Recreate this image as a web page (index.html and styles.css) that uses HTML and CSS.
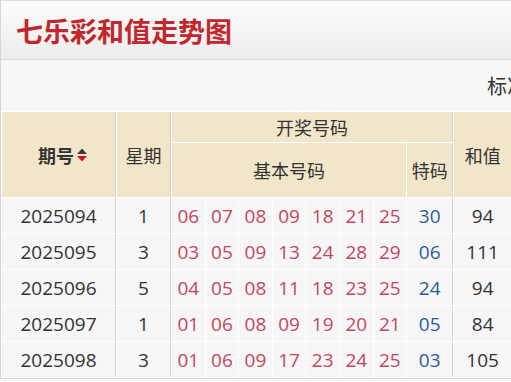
FILE: index.html
```html
<!DOCTYPE html>
<html lang="zh-CN">
<head>
<meta charset="utf-8">
<title>七乐彩和值走势图</title>
<link rel="stylesheet" href="styles.css">
</head>
<body>
<div class="page">
  <div class="titlebar"><h1 class="title">七乐彩和值走势图</h1></div>
  <div class="toolbar"><span class="mode">标准</span></div>
  <table class="chart">
    <thead>
      <tr class="hrow1">
        <th rowspan="2" class="c-issue grp"><span class="issue-head">期号<svg class="sort" width="10" height="14" viewBox="0 0 10 14"><polygon points="0,6 5,0.5 10,6" fill="#3a3a3a"/><polygon points="0,8 10,8 5,13.5" fill="#c8181e"/></svg></span></th>
        <th rowspan="2" class="c-week grp norm">星期</th>
        <th colspan="8" class="grp norm">开奖号码</th>
        <th rowspan="2" class="c-sum grp norm">和值</th>
      </tr>
      <tr class="hrow2">
        <th colspan="7" class="norm">基本号码</th>
        <th class="grp norm">特码</th>
      </tr>
    </thead>
    <tbody>
      <tr>
        <td class="c-issue grp">2025094</td><td class="c-week grp">1</td>
        <td class="c-num red">06</td><td class="c-num red">07</td><td class="c-num red">08</td><td class="c-num red">09</td><td class="c-num red">18</td><td class="c-num red">21</td><td class="c-num red">25</td>
        <td class="c-sp blue grp">30</td><td class="c-sum grp">94</td>
      </tr>
      <tr>
        <td class="c-issue grp">2025095</td><td class="c-week grp">3</td>
        <td class="c-num red">03</td><td class="c-num red">05</td><td class="c-num red">09</td><td class="c-num red">13</td><td class="c-num red">24</td><td class="c-num red">28</td><td class="c-num red">29</td>
        <td class="c-sp blue grp">06</td><td class="c-sum grp">111</td>
      </tr>
      <tr>
        <td class="c-issue grp">2025096</td><td class="c-week grp">5</td>
        <td class="c-num red">04</td><td class="c-num red">05</td><td class="c-num red">08</td><td class="c-num red">11</td><td class="c-num red">18</td><td class="c-num red">23</td><td class="c-num red">25</td>
        <td class="c-sp blue grp">24</td><td class="c-sum grp">94</td>
      </tr>
      <tr>
        <td class="c-issue grp">2025097</td><td class="c-week grp">1</td>
        <td class="c-num red">01</td><td class="c-num red">06</td><td class="c-num red">08</td><td class="c-num red">09</td><td class="c-num red">19</td><td class="c-num red">20</td><td class="c-num red">21</td>
        <td class="c-sp blue grp">05</td><td class="c-sum grp">84</td>
      </tr>
      <tr>
        <td class="c-issue grp">2025098</td><td class="c-week grp">3</td>
        <td class="c-num red">01</td><td class="c-num red">06</td><td class="c-num red">09</td><td class="c-num red">17</td><td class="c-num red">23</td><td class="c-num red">24</td><td class="c-num red">25</td>
        <td class="c-sp blue grp">03</td><td class="c-sum grp">105</td>
      </tr>
    </tbody>
  </table>
</div>
</body>
</html>
```
FILE: styles.css
```css
html, body {
  margin: 0;
  padding: 0;
  overflow: hidden;
  background: #f7f7f7;
}
body {
  font-family: "Open Sans", "Noto Sans CJK SC", sans-serif;
  color: #333;
}
.page {
  width: 900px;
  border-left: 1px solid #d6d6d6;
  border-top: 1px solid #dcdcdc;
  background: #f7f7f7;
}
.titlebar {
  height: 58px;
  display: flex;
  align-items: center;
  padding-left: 15px;
  background: linear-gradient(#fbfbfb, #ececec);
  border-bottom: 1px solid #d8d8d8;
}
.title {
  margin: 0;
  font-family: "Noto Sans CJK SC", sans-serif;
  font-size: 27px;
  font-weight: 700;
  color: #c1272d;
  line-height: 1;
  letter-spacing: 0;
}
.toolbar {
  height: 51px;
  display: flex;
  align-items: center;
  padding-left: 486px;
  background: #f7f7f7;
}
.mode {
  font-family: "Noto Sans CJK SC", sans-serif;
  font-size: 20px;
  color: #333;
}
.chart {
  border-collapse: separate;
  border-spacing: 1px;
  background: #fff;
  border-bottom: 1px solid #d4d4d4;
  font-size: 19px;
}
.chart th, .chart td {
  box-sizing: border-box;
  padding: 0;
  text-align: center;
  vertical-align: middle;
  white-space: nowrap;
}
.chart th {
  background: #f2e6ca;
  font-family: "Noto Sans CJK SC", sans-serif;
  font-size: 18px;
  font-weight: 700;
  color: #333;
}
.chart th.norm {
  font-weight: 400;
}
.chart td {
  background: #f6f6f6;
  height: 35px;
}
.hrow1 th { height: 30px; }
.hrow2 th { height: 54px; }
.grp { border-right: 1px solid #d4d4d4; }
.c-issue { width: 114px; }
.c-week { width: 54px; }
.c-num { width: 32.6px; }
.c-sp { width: 46px; }
.c-sum { width: 58px; }
.red { color: #c4465c; }
.blue { color: #2a5c9c; }
.issue-head {
  display: inline-flex;
  align-items: center;
  gap: 3px;
  margin-left: 8px;
}
.sort { display: block; }
```
